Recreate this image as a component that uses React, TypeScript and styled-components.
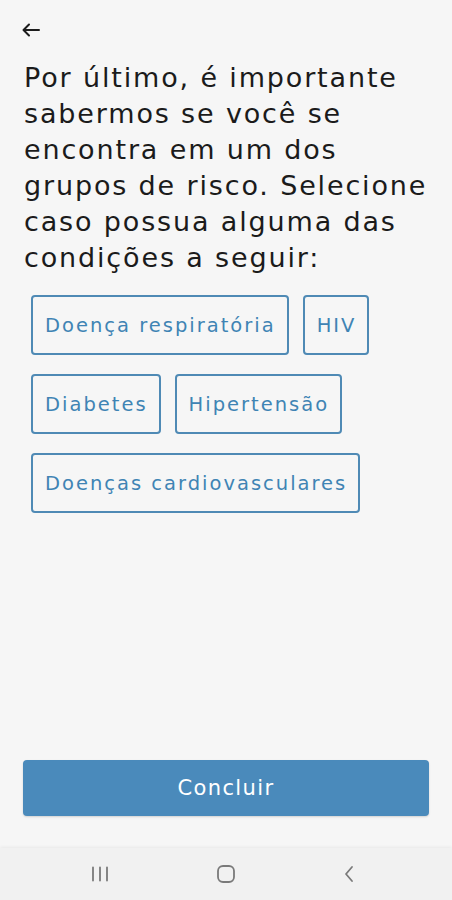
import React from "react";
import styled, { createGlobalStyle } from "styled-components";

const GlobalStyle = createGlobalStyle`
  html, body {
    margin: 0;
    padding: 0;
    background: #f6f6f6;
  }
  * {
    box-sizing: border-box;
  }
`;

const Screen = styled.div`
  width: 452px;
  height: 900px;
  display: flex;
  flex-direction: column;
  background: #f6f6f6;
  font-family: "DejaVu Sans", "Open Sans", sans-serif;
  overflow: hidden;
`;

const Body = styled.div`
  flex: 1;
  display: flex;
  flex-direction: column;
  padding: 20px 20px 0 24px;
`;

const BackButton = styled.button`
  width: 20px;
  height: 20px;
  padding: 0;
  margin-left: -3px;
  border: none;
  background: none;
  display: flex;
  align-items: center;
  justify-content: center;
  color: #1c1c1c;
`;

const Title = styled.h1`
  margin: 20px 0 0;
  font-size: 27px;
  line-height: 36px;
  font-weight: 400;
  color: #1b1b1b;
  letter-spacing: 1.85px;
`;

const ChipList = styled.div`
  display: flex;
  flex-wrap: wrap;
  column-gap: 14px;
  row-gap: 19px;
  margin-top: 19px;
  padding-left: 7px;
`;

const Chip = styled.button`
  height: 60px;
  padding: 0 11px 0 12px;
  border: 2px solid #4f8ab5;
  border-radius: 4px;
  background: transparent;
  color: #3f84b4;
  font-family: "DejaVu Sans", "Open Sans", sans-serif;
  font-size: 19.5px;
  letter-spacing: 2px;
  display: flex;
  align-items: center;
`;

const Spacer = styled.div`
  flex: 1;
`;

const PrimaryButton = styled.button`
  height: 56px;
  margin: 0 3px 32px -1px;
  border: none;
  border-radius: 4px;
  background: #4a8abb;
  color: #ffffff;
  font-family: "DejaVu Sans", "Open Sans", sans-serif;
  font-size: 21px;
  letter-spacing: 1.4px;
  box-shadow: 0 1px 2px rgba(0, 0, 0, 0.15);
`;

const NavBar = styled.nav`
  height: 52px;
  background: #f1f1f1;
  box-shadow: 0 -1px 3px rgba(0, 0, 0, 0.06);
  display: flex;
  align-items: center;
  justify-content: center;
  gap: 106px;
  padding-right: 6px;
  color: #7a7a7a;
`;

const conditions = [
  "Doença respiratória",
  "HIV",
  "Diabetes",
  "Hipertensão",
  "Doenças cardiovasculares",
];

const App: React.FC = () => {
  return (
    <>
      <GlobalStyle />
      <Screen>
        <Body>
          <BackButton aria-label="Voltar">
            <svg width="18" height="14" viewBox="0 0 18 14" fill="none" stroke="currentColor" strokeWidth="2" strokeLinecap="round" strokeLinejoin="round">
              <path d="M17 7H2" />
              <path d="M7 1.5L1.5 7L7 12.5" />
            </svg>
          </BackButton>
          <Title>
            Por último, é importante sabermos se você se encontra em um dos
            grupos de risco. Selecione caso possua alguma das condições a
            seguir:
          </Title>
          <ChipList>
            {conditions.map((c) => (
              <Chip key={c}>{c}</Chip>
            ))}
          </ChipList>
          <Spacer />
          <PrimaryButton>Concluir</PrimaryButton>
        </Body>
        <NavBar>
          <svg width="20" height="16" viewBox="0 0 20 16" fill="none" stroke="currentColor" strokeWidth="1.8" strokeLinecap="round">
            <path d="M3 1.5v13M10 1.5v13M17 1.5v13" />
          </svg>
          <svg width="20" height="20" viewBox="0 0 20 20" fill="none" stroke="currentColor" strokeWidth="1.8">
            <rect x="2" y="2" width="16" height="16" rx="5" />
          </svg>
          <svg width="14" height="18" viewBox="0 0 14 18" fill="none" stroke="currentColor" strokeWidth="1.8" strokeLinecap="round" strokeLinejoin="round">
            <path d="M10 2L4 9l6 7" />
          </svg>
        </NavBar>
      </Screen>
    </>
  );
};

export default App;
